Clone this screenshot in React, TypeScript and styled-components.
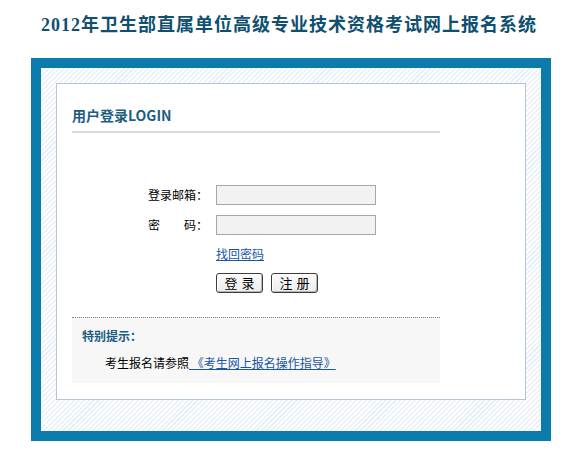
import React from "react";
import styled, { createGlobalStyle } from "styled-components";

const GlobalStyle = createGlobalStyle`
  html, body { margin: 0; padding: 0; background: #ffffff; }
  body {
    font-family: "Noto Sans CJK SC", "Liberation Sans", sans-serif;
    font-size: 12px;
    color: #000000;
  }
  * { box-sizing: border-box; }
`;

const Title = styled.h1`
  margin: 0 0 8px 0;
  height: 50px;
  line-height: 50px;
  text-align: center;
  font-family: "Liberation Serif", "Noto Sans CJK SC", serif;
  font-size: 18px;
  font-weight: bold;
  letter-spacing: 1px;
  color: #0f4f70;
`;

const Frame = styled.div`
  margin-left: 31px;
  width: 520px;
  height: 383px;
  border: 10px solid #0b7bab;
  padding: 15px 15px 31px 15px;
  background: repeating-linear-gradient(
    135deg,
    #ffffff 0px,
    #ffffff 2px,
    #e8f1f9 2px,
    #e8f1f9 3.5px
  );
`;

const Panel = styled.div`
  height: 317px;
  border: 1px solid #b4c6d4;
  background: #ffffff;
  padding: 0 85px 0 15px;
`;

const Heading = styled.div`
  padding-top: 21px;
  padding-bottom: 6px;
  line-height: 20px;
  font-size: 14px;
  font-weight: bold;
  color: #1b5e80;
  border-bottom: 2px solid #d9d9d9;
`;

const Form = styled.div`
  margin-top: 52px;
  display: grid;
  grid-template-columns: 136px 160px;
  column-gap: 8px;
  row-gap: 10px;
  grid-auto-rows: auto;
`;

const Label = styled.label`
  text-align: right;
  line-height: 20px;
  height: 20px;
  white-space: pre;
`;

const Input = styled.input`
  width: 160px;
  height: 20px;
  margin: 0;
  padding: 0 3px;
  border: 1px solid #a6a6a6;
  background: #f2f2f2;
  font-size: 12px;
  outline: none;
`;

const Spacer = styled.div``;

const LinkRow = styled.div`
  height: 18px;
  line-height: 18px;
`;

const Link = styled.a`
  color: #1856a3;
  text-decoration: underline;
  cursor: pointer;
`;

const Buttons = styled.div`
  display: flex;
  gap: 8px;
`;

const Button = styled.button`
  width: 47px;
  height: 20px;
  margin: 0;
  padding: 0;
  border: 1px solid #3c3c3c;
  border-radius: 3px;
  background: linear-gradient(#fbfbfb, #ececec);
  box-shadow: inset 1px 1px 0 #ffffff, inset -1px -1px 0 #b5b5b5;
  font-family: "Noto Sans CJK SC", sans-serif;
  font-size: 13px;
  line-height: 18px;
  letter-spacing: 4px;
  text-indent: 4px;
  color: #000000;
`;

const Tip = styled.div`
  margin-top: 24px;
  height: 66px;
  border-top: 1px dotted #7f7f7f;
  background: #f7f7f7;
  padding: 8px 10px 0 10px;
`;

const TipTitle = styled.div`
  line-height: 20px;
  font-weight: bold;
  color: #1b5e80;
`;

const TipText = styled.div`
  margin-top: 7px;
  padding-left: 23px;
  line-height: 20px;
`;

export default function App() {
  return (
    <>
      <GlobalStyle />
      <Title>2012年卫生部直属单位高级专业技术资格考试网上报名系统</Title>
      <Frame>
        <Panel>
          <Heading>用户登录LOGIN</Heading>
          <Form>
            <Label htmlFor="email">登录邮箱：</Label>
            <Input id="email" type="text" />
            <Label htmlFor="pwd">密　　码：</Label>
            <Input id="pwd" type="password" />
            <Spacer />
            <LinkRow>
              <Link>找回密码</Link>
            </LinkRow>
            <Spacer />
            <Buttons>
              <Button type="button">登录</Button>
              <Button type="button">注册</Button>
            </Buttons>
          </Form>
          <Tip>
            <TipTitle>特别提示：</TipTitle>
            <TipText>
              考生报名请参照<Link> 《考生网上报名操作指导》</Link>
            </TipText>
          </Tip>
        </Panel>
      </Frame>
    </>
  );
}
